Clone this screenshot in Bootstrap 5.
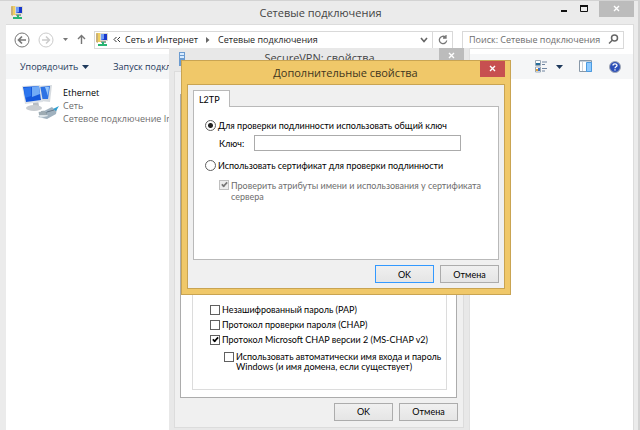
<!DOCTYPE html>
<html lang="ru">
<head>
<meta charset="utf-8">
<meta name="viewport" content="width=device-width, initial-scale=1">
<title>Сетевые подключения</title>
<link href="https://cdn.jsdelivr.net/npm/bootstrap@5.3.0/dist/css/bootstrap.min.css" rel="stylesheet">
<style>
  :root { --ui: "Open Sans", "Noto Sans", sans-serif; --dlg: Lato, "Noto Sans", sans-serif; --old: Lato, "Liberation Sans", sans-serif; }
  body { font-family: var(--ui); font-size: 9px; line-height: 13px; color: #1e1e1e; background: #ebebeb; }
  button { font-family: inherit; color: inherit; }
  h1, h2 { font-size: 11px; line-height: 16px; font-weight: 400; color: #444; margin: 0; }
  svg { display: block; flex: none; }

  .explorer { border: 1px solid #d3d3d3; border-width: 1px 2px 0 0; padding: 0 4px 0 6px; }
  .titlebar { height: 23px; }
  .caption-btn { border: 0; background: transparent; padding: 0; height: 16px; display: flex; align-items: center; justify-content: center; }
  .caption-small { width: 21px; }
  .caption-wide { width: 35px; }
  .caption-mid { width: 25px; }
  .caption-x { background: #bcbcbc; }
  .client { background: #fff; border: 1px solid #dcdcdc; border-width: 1px 1px 0 0; }
  .addr-row { height: 29px; }
  .field-box { border: 1px solid #d9d9d9; height: 18px; }
  .crumb { color: #1e1e1e; text-decoration: none; }
  .refresh { border: 0; border-left: 1px solid #d9d9d9; background: transparent; height: 16px; width: 20px; padding: 0 0 0 5px; }
  .search-form { width: 162px; margin: 0 9px; }
  .search-input { border: 0; outline: 0; background: transparent; padding: 0 0 0 6px; min-width: 0; font-size: 9px; line-height: 16px; color: #6d6d6d; }
  .search-input::placeholder { color: #6d6d6d; opacity: 1; }
  .cmdbar { height: 25px; background: #f5f6f7; color: #1e395b; padding-left: 14px; }
  .plain-btn { border: 0; background: transparent; padding: 0; white-space: nowrap; }
  .conn { color: #6d6d6d; white-space: nowrap; margin-left: 3px; padding-top: 3px; }
  .conn-name { color: #000; }

  .win-props { position: absolute; left: 169px; top: 48px; width: 301px; height: 390px; background: #e8e8e8; font-family: var(--old); font-size: 9px; line-height: 10px; color: #000; border-right: 1px solid #e0e0e0; padding: 0 5px; }
  .props-title { height: 23px; }
  .props-title h2 { font-family: var(--ui); padding: 2px 0 0 12px; }
  .props-body { background: #f0f0f0; border: 1px solid #dcdcdc; height: 357px; padding: 22px 5px 0 5px; }
  .props-page { background: #fff; border: 1px solid #acacac; height: 304px; padding: 0 9px 7px 11px; margin-right: 1px; }
  .auth-group { border: 1px solid #dcdcdc; padding: 0 0 17px 17px; }
  .opt { display: flex; align-items: center; gap: 2px; }
  .opt-indent { padding-left: 14px; }
  .auth-group .opt { margin-bottom: 5px; }
  .auth-group .opt-indent { margin: 2px 0 0; }
  .push { border: 1px solid #acacac; background: linear-gradient(#f0f0f0, #e5e5e5); width: 59px; height: 18px; padding: 0; }
  .push-default { border-color: #3399ff; }
  .push-row { display: flex; justify-content: flex-end; gap: 6px; padding-top: 5px; }

  .win-adv { position: absolute; left: 181px; top: 60px; width: 330px; background: #f0c869; border: 1px solid #c9a452; padding: 0 5px 5px; font-family: var(--dlg); font-size: 9px; line-height: 11px; color: #000; }
  .adv-title { height: 23px; }
  .adv-title h2 { font-family: var(--ui); color: #3f3620; }
  .adv-x { background: #c75050; }
  .adv-body { background: #f0f0f0; border: 1px solid #c9a452; padding: 5px; }
  .adv-tab { border: 1px solid #b9b9b9; border-bottom: 0; background: #fff; width: 37px; height: 17px; margin-bottom: -1px; position: relative; padding: 0 0 0 5px; text-align: left; }
  .adv-page { background: #fff; border: 1px solid #b9b9b9; height: 154px; padding: 13px 12px 0 11px; }
  .adv-page .opt + .opt, .adv-page .key-row + .opt { margin-top: 9px; }
  .key-label { width: 35px; }
  .key-input { border: 1px solid #ababab; height: 16px; padding: 0 4px; font-size: 9px; outline: 0; min-width: 0; width: 207px; }

  .tick, .dot { appearance: none; flex: none; margin: 0; width: 10px; height: 10px; border: 1px solid #606060; background: #fff center/8px 8px no-repeat; }
  .dot { width: 11px; height: 11px; border-radius: 50%; }
  .dot:checked { background-image: radial-gradient(circle, #222 0 2px, transparent 3px); background-size: 9px 9px; }
  .tick:checked::before { content: ""; display: block; width: 7px; height: 4px; margin: 1px 0 0 1px; border: solid #000; border-width: 0 0 2px 2px; transform: rotate(-47deg) scale(.85); }
  .tick:disabled { border-color: #c0c0c0; background-color: #ededed; }
  .tick:disabled::before { border-color: #777; }
  .dim { color: #6d6d6d; }
</style>
</head>
<body>
<main class="position-relative vh-100 overflow-hidden">

  <section class="explorer d-flex flex-column h-100">
    <header class="titlebar d-flex align-items-start">
      <svg class="mt-1 ms-1" width="14" height="15" viewBox="0 0 14 15" aria-hidden="true"><path d="M1 1h5v9H1z" fill="#f0cf60"/><path d="M1 10V2l2-1v10z" fill="#c9b078"/><path d="M5 1h8v8H5z" fill="#dcd9cc"/><path d="M6 2h6v6H6z" fill="#1737cc"/><path d="M6 2h3v5l-3 1z" fill="#6f9cf5"/><path d="M6 9h5v2H6z" fill="#98a59b"/><path d="M7 10h2v2h3v2H3v-2h4z" fill="#28b573"/></svg>
      <h1 class="flex-fill text-center pt-1 ps-5 ms-3">Сетевые подключения</h1>
      <button class="caption-btn caption-small" type="button" aria-label="Свернуть"><svg width="8" height="8"><path d="M1 5h6v2H1z" fill="#111"/></svg></button>
      <button class="caption-btn caption-small" type="button" aria-label="Развернуть"><svg width="9" height="8"><path d="M.5.5h7v6h-7z" fill="none" stroke="#111"/><path d="M0 0h8v2H0z" fill="#111"/></svg></button>
      <button class="caption-btn caption-wide caption-x ms-1" type="button" aria-label="Закрыть"><svg width="8" height="8" viewBox="0 0 8 8"><path d="M1 1l5 5M6 1L1 6" stroke="#fff" stroke-width="1.4"/></svg></button>
    </header>

    <div class="client flex-fill">
      <nav class="addr-row d-flex align-items-center" aria-label="Адрес">
        <button class="plain-btn ms-2" type="button" aria-label="Назад"><svg width="16" height="16" viewBox="0 0 16 16" fill="none" stroke="#777"><circle cx="8" cy="8" r="7"/><path d="M12 8H5M8 4.500L4.500 8L8 11.500" stroke-width="1.700"/></svg></button>
        <button class="plain-btn ms-2" type="button" aria-label="Вперед"><svg width="16" height="16" viewBox="0 0 16 16" fill="none" stroke="#ccc"><circle cx="8" cy="8" r="7"/><path d="M4 8h7M8 4.500L11.500 8L8 11.500" stroke-width="1.500"/></svg></button>
        <button class="plain-btn ms-2" type="button" aria-label="Журнал"><svg width="7" height="5"><path d="M1 1h5L3.500 4z" fill="#777"/></svg></button>
        <button class="plain-btn ms-2" type="button" aria-label="Вверх"><svg width="9" height="11" fill="none" stroke="#777" stroke-width="1.400"><path d="M4.500 10V1.500M1 5l3.500-3.500L8 5"/></svg></button>
        <div class="field-box d-flex align-items-center ms-2 flex-fill">
          <svg width="14" height="15" viewBox="0 0 14 15" aria-hidden="true"><path d="M1 1h5v9H1z" fill="#f0cf60"/><path d="M1 10V2l2-1v10z" fill="#c9b078"/><path d="M5 1h8v8H5z" fill="#dcd9cc"/><path d="M6 2h6v6H6z" fill="#1737cc"/><path d="M6 2h3v5l-3 1z" fill="#6f9cf5"/><path d="M6 9h5v2H6z" fill="#98a59b"/><path d="M7 10h2v2h3v2H3v-2h4z" fill="#28b573"/></svg>
          <svg class="ms-1" width="8" height="7" fill="none" stroke="#333"><path d="M3.500 1L1 3.500L3.500 6M7 1L4.500 3.500L7 6"/></svg>
          <a class="crumb ms-1" href="#">Сеть и Интернет</a>
          <svg class="mx-2" width="4" height="6"><path d="M0 0l3.500 3L0 6z" fill="#666"/></svg>
          <a class="crumb" href="#">Сетевые подключения</a>
          <svg class="ms-auto me-1" width="8" height="6" fill="none" stroke="#666" stroke-width="1.600"><path d="M1 1l3 3.500L7 1"/></svg>
          <button class="refresh" type="button" aria-label="Обновить"><svg width="10" height="10" viewBox="0 0 10 10" fill="none" stroke="#777" stroke-width="1.300"><path d="M7.500 2.200A3.700 3.700 0 1 0 8.700 5.500M8 0v3H5"/></svg></button>
        </div>
        <form class="field-box search-form d-flex align-items-center">
          <input class="search-input flex-fill" type="text" placeholder="Поиск: Сетевые подключения" aria-label="Поиск">
          <svg class="me-1" width="11" height="11" fill="none" stroke="#666" stroke-width="1.500"><circle cx="6.500" cy="4" r="3"/><path d="M4.500 6L1 9.500"/></svg>
        </form>
      </nav>

      <div class="cmdbar d-flex align-items-center">
        <button class="plain-btn d-flex align-items-center" type="button">Упорядочить<svg class="ms-1" width="7" height="4"><path d="M0 0h7L3.500 4z" fill="#1e395b"/></svg></button>
        <button class="plain-btn ms-4" type="button">Запуск подключения</button>
        <div class="d-flex align-items-center ms-auto me-2 pe-1">
          <button class="plain-btn d-flex align-items-center" type="button" aria-label="Изменить представление">
            <svg width="13" height="13" viewBox="0 0 13 13"><path d="M.5.500h5v5h-5zM.500 7h5v5h-5z" fill="#fff" stroke="#9aa8b5"/><path d="M1 3h4v2H1z" fill="#266d9a"/><path d="M1 9h2v2H1z" fill="#e6a02c"/><path d="M3 8h2v3H3z" fill="#3970c5"/><path d="M7 2h5M7 4.500h3M7 8.500h5M7 11h3" stroke="#7085a0"/></svg>
            <svg class="ms-2" width="7" height="4"><path d="M0 0h7L3.500 4z" fill="#1e395b"/></svg>
          </button>
          <button class="plain-btn ms-3" type="button" aria-label="Область просмотра"><svg width="14" height="13"><path d="M.5.500h12v11H.500z" fill="#fff" stroke="#8898a8"/><path d="M1 1h11v1H1z" fill="#c6d1dc"/><path d="M3.500 2v9" stroke="#c9d2db"/><path d="M7.500 2.500h5v9h-5z" fill="#8fcaff" stroke="#4b9be0"/></svg></button>
          <button class="plain-btn ms-3" type="button" aria-label="Справка"><svg width="12" height="12" viewBox="0 0 12 12"><circle cx="6" cy="6" r="5.500" fill="#2d50b8" stroke="#a2a8b5"/><path d="M4 4.600C4 2.400 8 2.400 8 4.500C8 5.900 6 5.700 6 7.300M6 8.300v1.300" fill="none" stroke="#fff" stroke-width="1.300"/></svg></button>
        </div>
      </div>

      <div class="d-flex ps-3 pt-1">
        <svg width="38" height="38" viewBox="0 0 38 38" aria-hidden="true">
          <path d="M14 3l16-1-2 17-10-1z" fill="#d6dbe0"/><path d="M18 4l10-1-2 13-8 0z" fill="#2d72e4"/><path d="M23 4h4l-1 9z" fill="#95c6fb"/>
          <path d="M11 18l5-1 1 6-6 1z" fill="#b8bdc3"/><ellipse cx="12" cy="25" rx="8" ry="3" fill="#c8ccd0"/>
          <path d="M0 3l18-1 3 17-18 2z" fill="#dde2e7"/><path d="M1 4l16-1 2 14-15 2z" fill="#1558dc"/><path d="M10 4l7-1 1 8-8 3z" fill="#72aaf5"/><path d="M2 5l7-1v9l-6 2z" fill="#2b75ee"/>
          <path d="M22 28l8-4 2 2 3-1-1 6-9 5-9-2z" fill="#a0b1be"/><path d="M16 29l6-2 4 6-8 2z" fill="#dbe3e8"/><path d="M18 29v3m2-4v4m2-4v4m2-3v3" stroke="#63747e"/><path d="M31 26l6-3-3 5z" fill="#2f9fd0"/><path d="M25 29l7-2" stroke="#66798a"/>
        </svg>
        <div class="conn">
          <div class="conn-name">Ethernet</div>
          <div>Сеть</div>
          <div>Сетевое подключение Intel</div>
        </div>
      </div>
    </div>
  </section>

  <section class="win-props d-flex flex-column">
    <header class="props-title d-flex align-items-start">
      <svg class="mt-1 ms-1" width="10" height="14"><path d="M1 0h6v14H1z" fill="#6b9bd0"/><path d="M2 1h4v2H2zM2 4h4v2H2z" fill="#d7ebff"/></svg>
      <h2 class="flex-fill text-center">SecureVPN: свойства</h2>
      <button class="caption-btn caption-mid caption-x" type="button" aria-label="Закрыть"><svg width="8" height="8" viewBox="0 0 8 8"><path d="M1 1l5 5M6 1L1 6" stroke="#fff" stroke-width="1.400"/></svg></button>
    </header>
    <div class="props-body">
      <div class="props-page d-flex flex-column">
        <div class="auth-group flex-fill d-flex flex-column justify-content-end">
          <label class="opt"><input class="tick" type="checkbox">Незашифрованный пароль (PAP)</label>
          <label class="opt"><input class="tick" type="checkbox">Протокол проверки пароля (CHAP)</label>
          <label class="opt"><input class="tick" type="checkbox" checked>Протокол Microsoft CHAP версии 2 (MS-CHAP v2)</label>
          <label class="opt opt-indent align-items-start"><input class="tick" type="checkbox"><span>Использовать автоматически имя входа и пароль Windows (и имя домена, если существует)</span></label>
        </div>
      </div>
      <div class="push-row">
        <button class="push" type="button">OK</button>
        <button class="push" type="button">Отмена</button>
      </div>
    </div>
  </section>

  <section class="win-adv" role="dialog" aria-labelledby="adv-heading">
    <header class="adv-title d-flex align-items-start">
      <h2 id="adv-heading" class="flex-fill text-center pt-1 ps-4">Дополнительные свойства</h2>
      <button class="caption-btn caption-mid adv-x" type="button" aria-label="Закрыть"><svg width="8" height="8" viewBox="0 0 8 8"><path d="M1 1l5 5M6 1L1 6" stroke="#fff" stroke-width="1.400"/></svg></button>
    </header>
    <div class="adv-body">
      <button class="adv-tab d-block" type="button">L2TP</button>
      <div class="adv-page">
        <label class="opt"><input class="dot" type="radio" name="auth" checked>Для проверки подлинности использовать общий ключ</label>
        <div class="key-row d-flex align-items-center mt-1 opt-indent">
          <label for="key" class="key-label">Ключ:</label>
          <input id="key" class="key-input" type="text">
        </div>
        <label class="opt"><input class="dot" type="radio" name="auth">Использовать сертификат для проверки подлинности</label>
        <label class="opt opt-indent align-items-start dim"><input class="tick" type="checkbox" checked disabled><span>Проверить атрибуты имени и использования у сертификата сервера</span></label>
      </div>
      <div class="push-row">
        <button class="push push-default" type="button">OK</button>
        <button class="push" type="button">Отмена</button>
      </div>
    </div>
  </section>
</main>
<script src="https://cdn.jsdelivr.net/npm/bootstrap@5.3.0/dist/js/bootstrap.bundle.min.js"></script>
</body>
</html>
